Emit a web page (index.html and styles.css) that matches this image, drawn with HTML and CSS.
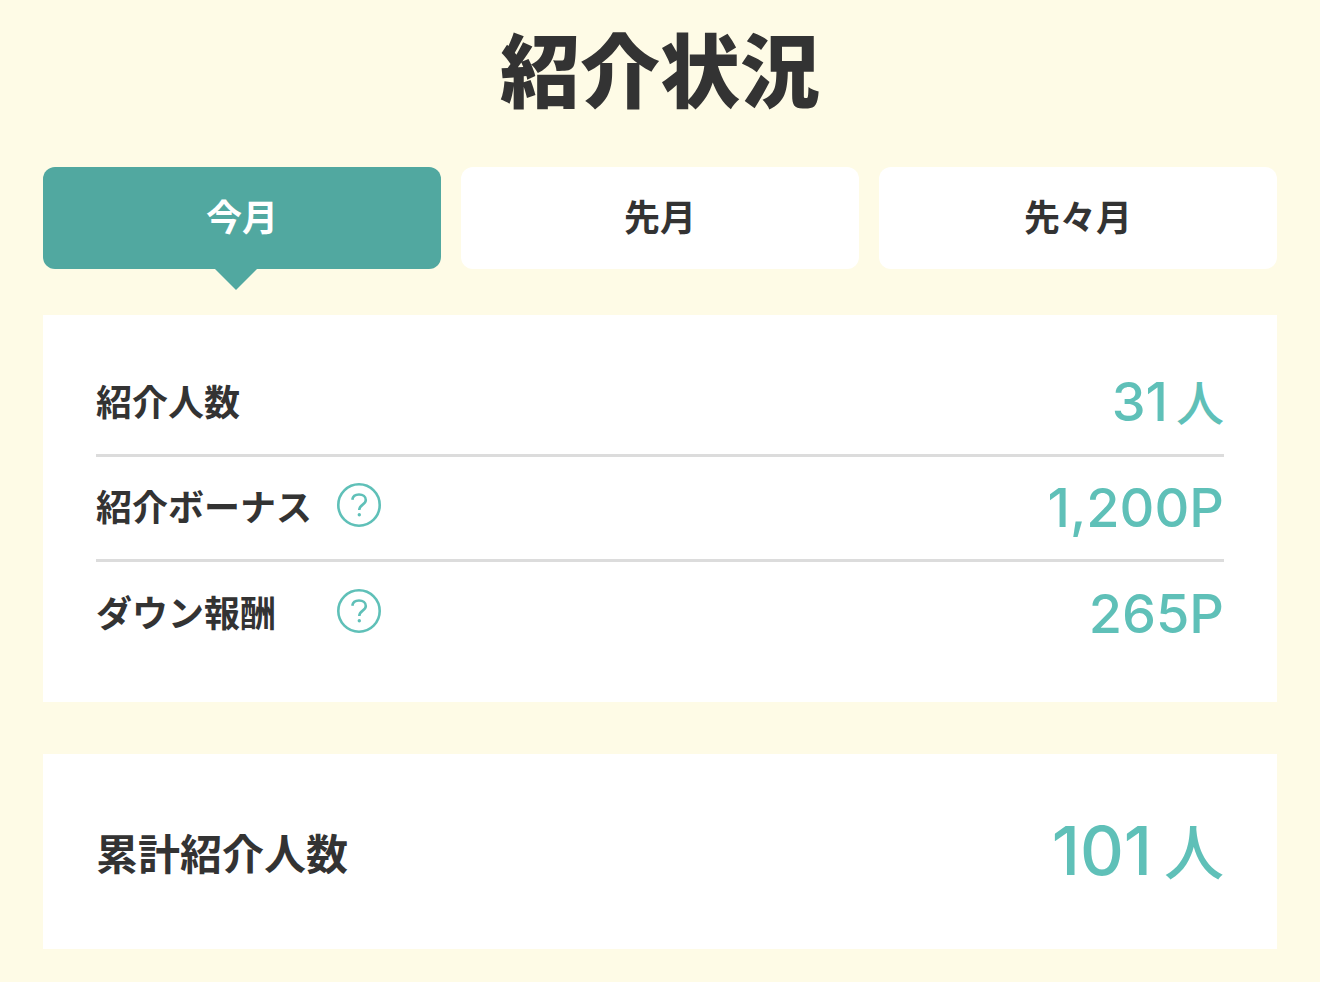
FILE: index.html
```
<!DOCTYPE html>
<html lang="ja">

<head>
    <meta charset="UTF-8">
    <meta name="viewport" content="width=device-width, initial-scale=1.0">
    <title>紹介状況</title>
    <link rel="stylesheet" href="styles.css">
</head>

<body>
    <div class="container">
        <h1 class="page-title">紹介状況</h1>
        <div class="tabs">
            <button type="button" class="tab active">今月</button>
            <button type="button" class="tab">先月</button>
            <button type="button" class="tab">先々月</button>
        </div>
        <div class="card">
            <div class="row">
                <div class="label">紹介人数</div>
                <div class="value">31<span class="unit">人</span></div>
            </div>
            <div class="row">
                <div class="label">紹介ボーナス</div>
                <button type="button" class="help" aria-label="紹介ボーナスについて">
                    <svg viewBox="0 0 44 44" width="44" height="44">
                        <circle cx="22" cy="22" r="20.7" />
                        <path d="M15.3 16.7C15.8 13.4 18.5 11.5 22 11.5C26 11.5 28.8 13.6 28.8 17C28.8 22 22.3 21.3 22.3 27" />
                        <circle class="dot" cx="22.3" cy="31.7" r="1.7" />
                    </svg>
                </button>
                <div class="value">1,200P</div>
            </div>
            <div class="row">
                <div class="label">ダウン報酬</div>
                <button type="button" class="help" aria-label="ダウン報酬について">
                    <svg viewBox="0 0 44 44" width="44" height="44">
                        <circle cx="22" cy="22" r="20.7" />
                        <path d="M15.3 16.7C15.8 13.4 18.5 11.5 22 11.5C26 11.5 28.8 13.6 28.8 17C28.8 22 22.3 21.3 22.3 27" />
                        <circle class="dot" cx="22.3" cy="31.7" r="1.7" />
                    </svg>
                </button>
                <div class="value">265P</div>
            </div>
        </div>
        <div class="card total">
            <div class="row">
                <div class="label">累計紹介人数</div>
                <div class="value">101<span class="unit">人</span></div>
            </div>
        </div>
    </div>
</body>

</html>
```
FILE: styles.css
```
* {
    box-sizing: border-box;
}

body {
    margin: 0;
    background: #fefbe6;
    color: #333;
    font-family: "Noto Sans CJK JP", sans-serif;
}

.container {
    padding: 6px 43px 32px;
}

.page-title {
    margin: 0 0 41px;
    font-size: 80px;
    font-weight: 900;
    line-height: 120px;
    text-align: center;
}

.tabs {
    display: flex;
    gap: 20px;
    margin-bottom: 46px;
}

.tab {
    position: relative;
    flex: 1;
    height: 102px;
    padding: 0 0 6px;
    border: 0;
    border-radius: 12px;
    background: #fff;
    color: #333;
    font-family: inherit;
    font-size: 36px;
    font-weight: 700;
    cursor: pointer;
}

.tab.active {
    background: #51a8a0;
    color: #fff;
}

.tab.active::after {
    content: "";
    position: absolute;
    top: 100%;
    left: 172px;
    border: 21px solid transparent;
    border-top-color: #51a8a0;
    border-bottom: 0;
}

.card {
    margin: 0 0 52px;
    padding: 37px 53px;
    background: #fff;
}

.row {
    display: flex;
    align-items: center;
    height: 105px;
    padding-bottom: 6px;
    border-bottom: 3px solid #dcdcdc;
}

.row:last-child {
    height: 103px;
    border-bottom: 0;
}

.label {
    min-width: 241px;
    font-size: 36px;
    font-weight: 700;
    line-height: 54px;
}

.help {
    display: flex;
    padding: 0;
    border: 0;
    background: none;
    cursor: pointer;
}

.help svg {
    fill: none;
    stroke: #5fc0b8;
    stroke-width: 2.6;
}

.help .dot {
    fill: #5fc0b8;
    stroke: none;
}

.value {
    margin-left: auto;
    padding-top: 6px;
    color: #5fc0b8;
    font-family: Inter, "Noto Sans CJK JP", sans-serif;
    font-size: 54px;
    font-weight: 500;
    line-height: 80px;
}

.unit {
    margin-left: 8px;
    font-size: 48px;
}

.total {
    margin-bottom: 0;
    padding-top: 46px;
    padding-bottom: 46px;
}

.total .row {
    padding-bottom: 0;
}

.total .label {
    font-size: 42px;
}

.total .value {
    padding-top: 0;
    font-size: 68px;
}

.total .unit {
    margin-left: 12px;
    font-size: 60px;
}
```
